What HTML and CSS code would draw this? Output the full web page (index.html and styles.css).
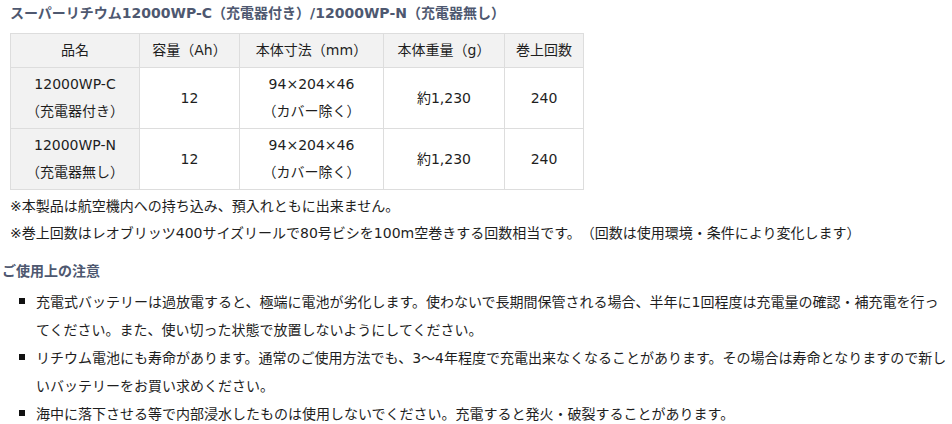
FILE: index.html
```html
<!DOCTYPE html>
<html lang="ja">
<head>
<meta charset="utf-8">
<link rel="stylesheet" href="styles.css">
</head>
<body>
<div class="page">
  <h3 class="title">スーパーリチウム12000WP-C（充電器付き）/12000WP-N（充電器無し）</h3>
  <table class="spec">
    <colgroup>
      <col class="c1"><col class="c2"><col class="c3"><col class="c4"><col class="c5">
    </colgroup>
    <thead>
      <tr><th>品名</th><th>容量（Ah）</th><th>本体寸法（mm）</th><th>本体重量（g）</th><th>巻上回数</th></tr>
    </thead>
    <tbody>
      <tr><th>12000WP-C<br>（充電器付き）</th><td>12</td><td>94×204×46<br>（カバー除く）</td><td>約1,230</td><td>240</td></tr>
      <tr><th>12000WP-N<br>（充電器無し）</th><td>12</td><td>94×204×46<br>（カバー除く）</td><td>約1,230</td><td>240</td></tr>
    </tbody>
  </table>
  <p class="note first">※本製品は航空機内への持ち込み、預入れともに出来ません。</p>
  <p class="note">※巻上回数はレオブリッツ400サイズリールで80号ビシを100m空巻きする回数相当です。（回数は使用環境・条件により変化します）</p>
  <h3 class="caution">ご使用上の注意</h3>
  <ul class="list">
    <li>充電式バッテリーは過放電すると、極端に電池が劣化します。使わないで長期間保管される場合、半年に1回程度は充電量の確認・補充電を行ってください。また、使い切った状態で放置しないようにしてください。</li>
    <li>リチウム電池にも寿命があります。通常のご使用方法でも、3～4年程度で充電出来なくなることがあります。その場合は寿命となりますので新しいバッテリーをお買い求めください。</li>
    <li>海中に落下させる等で内部浸水したものは使用しないでください。充電すると発火・破裂することがあります。</li>
  </ul>
</div>
</body>
</html>
```

FILE: styles.css
```css
html, body {
  margin: 0;
  padding: 0;
  background: #fff;
}
body {
  font-family: "DejaVu Sans", "Noto Sans CJK JP", sans-serif;
  font-size: 14px;
  color: #333;
  text-spacing-trim: space-all;
}
.page {
  padding: 0 1px 0 10px;
}
.title {
  margin: 0 0 6px 0;
  font-size: 14px;
  line-height: 27px;
  font-weight: bold;
  color: #4e5870;
}
.spec {
  border-collapse: collapse;
  table-layout: fixed;
  width: 573px;
}
.c1 { width: 129px; }
.c2 { width: 100px; }
.c3 { width: 144px; }
.c4 { width: 121px; }
.c5 { width: 79px; }
.spec th, .spec td {
  border: 1px solid #dddddd;
  padding: 3px 4px;
  line-height: 27px;
  text-align: center;
  font-weight: normal;
  color: #1e1e1e;
}
.spec thead th, .spec tbody th {
  background: #f2f2f2;
}
.note {
  margin: 0;
  line-height: 27px;
  color: #1e1e1e;
}
.note.first {
  margin-top: 3px;
}
.caution {
  margin: 11px 0 3px -8px;
  font-size: 14px;
  line-height: 27px;
  font-weight: bold;
  color: #4e5870;
}
.list {
  margin: 0;
  padding-left: 26px;
  list-style: none;
  color: #1e1e1e;
}
.list li {
  line-height: 28px;
}
.list li::before {
  content: "";
  display: inline-block;
  width: 6px;
  height: 6px;
  background: #111;
  margin-left: -17px;
  margin-right: 11px;
  vertical-align: 3px;
}
```
